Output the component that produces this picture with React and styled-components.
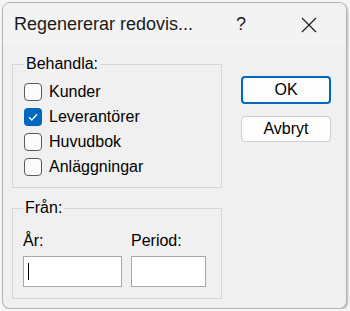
import React from 'react';
import styled, { createGlobalStyle } from 'styled-components';

const GlobalStyle = createGlobalStyle`
    html, body {
        margin: 0;
        padding: 0;
        background: #f6f6f6;
    }
    body {
        font-family: "Liberation Sans", Arial, sans-serif;
    }
`

const categories = [
    { label: 'Kunder', checked: false },
    { label: 'Leverantörer', checked: true },
    { label: 'Huvudbok', checked: false },
    { label: 'Anläggningar', checked: false },
];

function CheckBox(props)
{
    let { checked } = props;
    return (
        <Box checked={ checked }>
            { checked &&
                <svg width="12" height="12" viewBox="0 0 12 12">
                    <path d="M2 6.2 L4.8 9 L10 3.2" fill="none" stroke="#fff" strokeWidth="1.3" />
                </svg>
            }
        </Box>
    )
}

function App()
{
  return (
    <Page>
        <GlobalStyle />
        <Window>
            <TitleBar>
                <Title>Regenererar redovis...</Title>
                <Help>?</Help>
                <Close>
                    <svg width="16" height="16" viewBox="0 0 16 16">
                        <path d="M1 1 L15 15 M15 1 L1 15" stroke="#1b1b1b" strokeWidth="1.2" />
                    </svg>
                </Close>
            </TitleBar>
            <Body>
                <LeftColumn>
                    <Group pad={ 11 } bottom={ 8 }>
                        <Legend>Behandla:</Legend>
                        <CheckList>
                            { categories.map((c) => (
                                <CheckRow key={ c.label }>
                                    <CheckBox checked={ c.checked } />
                                    <span>{ c.label }</span>
                                </CheckRow>
                            )) }
                        </CheckList>
                    </Group>
                    <Group pad={ 10 } bottom={ 11 }>
                        <Legend>Från:</Legend>
                        <Fields>
                            <Field>
                                <FieldLabel>År:</FieldLabel>
                                <TextBox width={ 99 }><Caret /></TextBox>
                            </Field>
                            <Field>
                                <FieldLabel>Period:</FieldLabel>
                                <TextBox width={ 75 } />
                            </Field>
                        </Fields>
                    </Group>
                </LeftColumn>
                <Buttons>
                    <Button primary>OK</Button>
                    <Button>Avbryt</Button>
                </Buttons>
            </Body>
        </Window>
    </Page>
  )
}

export default App;

const Page = styled.div`
    padding: 2px 0 0 2px;
`

const Window = styled.div`
    width: 343px;
    height: 305px;
    border: 1px solid #b4b4b4;
    border-radius: 8px;
    background: #f0f0f0;
    overflow: hidden;
    box-shadow: 1px 1px 2px rgba(0, 0, 0, 0.25);
    display: flex;
    flex-direction: column;
    color: #000;
`

const TitleBar = styled.div`
    height: 42px;
    background: #f3f3f3;
    display: flex;
    align-items: flex-start;
    padding: 10px 0 0 11px;
    box-sizing: border-box;
`

const Title = styled.div`
    font-size: 18px;
    line-height: 22px;
    color: #1a1a1a;
    width: 222px;
`

const Help = styled.div`
    font-size: 18px;
    line-height: 22px;
    color: #1a1a1a;
    width: 65px;
`

const Close = styled.div`
    padding-top: 4px;
    svg { display: block; }
`

const Body = styled.div`
    display: flex;
    padding: 10px 0 0 9px;
    gap: 19px;
`

const LeftColumn = styled.div`
    display: flex;
    flex-direction: column;
    gap: 11px;
    width: 210px;
`

const Group = styled.fieldset`
    margin: 0;
    padding: 0 ${ (p) => p.pad }px ${ (p) => p.bottom }px ${ (p) => p.pad }px;
    border: 1px solid #d6d6d6;
    min-inline-size: 0;
`

const Legend = styled.legend`
    padding: 0 2px;
    font-size: 16px;
    line-height: 18px;
`

const CheckList = styled.div`
    display: flex;
    flex-direction: column;
    padding-top: 6px;
`

const CheckRow = styled.div`
    display: flex;
    align-items: center;
    height: 25px;
    gap: 7px;
    font-size: 16px;
`

const Box = styled.div`
    width: 18px;
    height: 18px;
    box-sizing: border-box;
    border-radius: 4px;
    border: ${ (p) => p.checked ? 'none' : '1.5px solid #5a5a5a' };
    background: ${ (p) => p.checked ? '#0067c0' : '#fbfbfb' };
    display: flex;
    align-items: center;
    justify-content: center;
`

const Fields = styled.div`
    display: flex;
    gap: 9px;
    padding-top: 15px;
`

const Field = styled.div`
    display: flex;
    flex-direction: column;
    gap: 6px;
`

const FieldLabel = styled.div`
    font-size: 16px;
    line-height: 18px;
`

const TextBox = styled.div`
    width: ${ (p) => p.width }px;
    height: 31px;
    box-sizing: border-box;
    border: 1px solid #a8a8a8;
    background: #fff;
    display: flex;
    align-items: center;
    padding-left: 4px;
`

const Caret = styled.div`
    width: 1px;
    height: 17px;
    background: #000;
`

const Buttons = styled.div`
    display: flex;
    flex-direction: column;
    gap: 12px;
    padding-top: 21px;
`

const Button = styled.div`
    width: 90px;
    height: ${ (p) => p.primary ? 28 : 26 }px;
    box-sizing: border-box;
    border-radius: 4px;
    border: ${ (p) => p.primary ? '2px solid #0067c0' : '1px solid #cfcfcf' };
    background: #fdfdfd;
    display: flex;
    align-items: center;
    justify-content: center;
    font-size: 16px;
`
